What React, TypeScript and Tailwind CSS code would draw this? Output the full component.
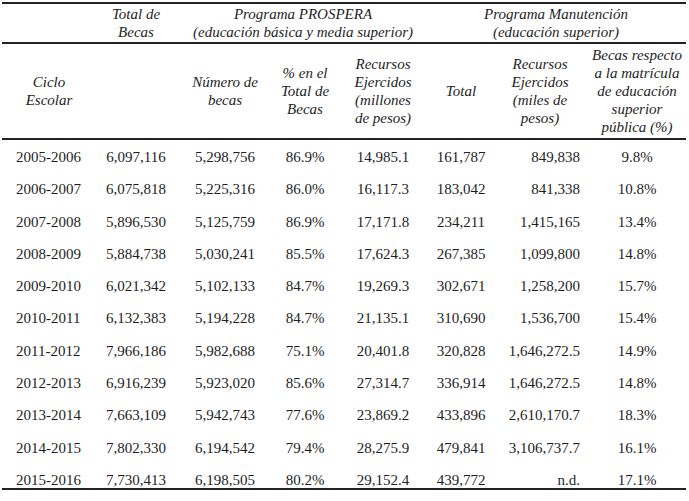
const rows = [
  ['2005-2006', '6,097,116', '5,298,756', '86.9%', '14,985.1', '161,787', '849,838', '9.8%'],
  ['2006-2007', '6,075,818', '5,225,316', '86.0%', '16,117.3', '183,042', '841,338', '10.8%'],
  ['2007-2008', '5,896,530', '5,125,759', '86.9%', '17,171.8', '234,211', '1,415,165', '13.4%'],
  ['2008-2009', '5,884,738', '5,030,241', '85.5%', '17,624.3', '267,385', '1,099,800', '14.8%'],
  ['2009-2010', '6,021,342', '5,102,133', '84.7%', '19,269.3', '302,671', '1,258,200', '15.7%'],
  ['2010-2011', '6,132,383', '5,194,228', '84.7%', '21,135.1', '310,690', '1,536,700', '15.4%'],
  ['2011-2012', '7,966,186', '5,982,688', '75.1%', '20,401.8', '320,828', '1,646,272.5', '14.9%'],
  ['2012-2013', '6,916,239', '5,923,020', '85.6%', '27,314.7', '336,914', '1,646,272.5', '14.8%'],
  ['2013-2014', '7,663,109', '5,942,743', '77.6%', '23,869.2', '433,896', '2,610,170.7', '18.3%'],
  ['2014-2015', '7,802,330', '6,194,542', '79.4%', '28,275.9', '479,841', '3,106,737.7', '16.1%'],
  ['2015-2016', '7,730,413', '6,198,505', '80.2%', '29,152.4', '439,772', 'n.d.', '17.1%'],
]

// column widths add up to the 684px table
const cols = 'grid grid-cols-[94px_80px_98px_62px_94px_62px_96px_98px]'

export default function App() {
  return (
    <div className="w-[689px] h-[501px] bg-white pt-[2px] pl-[2px] font-['Liberation_Serif',serif] text-[15px] leading-[18px] text-[#1e1e1e]">
      <div className="w-[684px] border-t-2 border-b-2 border-[#222]">
        {/* group headers */}
        <div className={`${cols} h-[40px] items-center italic text-center border-b-2 border-[#222]`}>
          <div />
          <div>Total de<br />Becas</div>
          <div className="col-span-3">Programa PROSPERA<br />(educación básica y media superior)</div>
          <div className="col-span-3 pr-[4px]">Programa Manutención<br />(educación superior)</div>
        </div>

        {/* column headers */}
        <div className={`${cols} h-[96px] items-center italic text-center border-b-2 border-[#222]`}>
          <div>Ciclo<br />Escolar</div>
          <div />
          <div>Número de<br />becas</div>
          <div>% en el<br />Total de<br />Becas</div>
          <div>Recursos<br />Ejercidos<br />(millones<br />de pesos)</div>
          <div>Total</div>
          <div>Recursos<br />Ejercidos<br />(miles de<br />pesos)</div>
          <div>Becas respecto<br />a la matrícula<br />de educación<br />superior<br />pública (%)</div>
        </div>

        {rows.map((r, i) => (
          <div
            key={r[0]}
            className={`${cols} pt-[8px] ${i === rows.length - 1 ? 'h-[25px]' : 'h-[32.3px]'}`}
          >
            <div className="pl-[14px]">{r[0]}</div>
            <div className="text-center">{r[1]}</div>
            <div className="text-center">{r[2]}</div>
            <div className="text-center">{r[3]}</div>
            <div className="text-center">{r[4]}</div>
            <div className="text-center">{r[5]}</div>
            <div className="text-right pr-[8px]">{r[6]}</div>
            <div className="text-center">{r[7]}</div>
          </div>
        ))}
      </div>
    </div>
  )
}
